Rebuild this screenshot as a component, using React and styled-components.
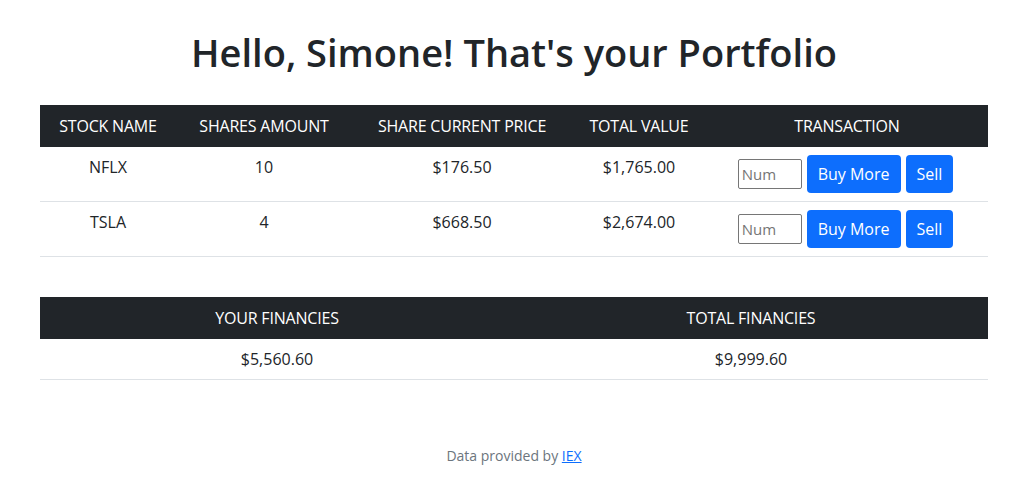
import styled, { createGlobalStyle } from "styled-components";

const GlobalStyle = createGlobalStyle`
  body {
    margin: 0;
    background: #fff;
    color: #212529;
    font-family: "Open Sans", "Noto Sans", sans-serif;
    font-size: 16px;
    line-height: 1.5;
  }
`

const stocks = [
    { name: "NFLX", amount: 10, price: "$176.50", total: "$1,765.00" },
    { name: "TSLA", amount: 4, price: "$668.50", total: "$2,674.00" },
]

function App(){
    return(
        <Page>
            <GlobalStyle />
            <Title>Hello, Simone! That's your Portfolio</Title>
            <Table>
                <colgroup>
                    <col style={{ width: "136px" }} />
                    <col style={{ width: "176px" }} />
                    <col style={{ width: "220px" }} />
                    <col style={{ width: "134px" }} />
                    <col />
                </colgroup>
                <thead>
                    <tr>
                        <Th>STOCK NAME</Th>
                        <Th>SHARES AMOUNT</Th>
                        <Th>SHARE CURRENT PRICE</Th>
                        <Th>TOTAL VALUE</Th>
                        <Th>TRANSACTION</Th>
                    </tr>
                </thead>
                <tbody>
                    {stocks.map((stock)=> (
                        <tr key={stock.name}>
                            <Td>{stock.name}</Td>
                            <Td>{stock.amount}</Td>
                            <Td>{stock.price}</Td>
                            <Td>{stock.total}</Td>
                            <Td>
                                <Transaction>
                                    <NumInput placeholder="Num" />
                                    <Button>Buy More</Button>
                                    <Button>Sell</Button>
                                </Transaction>
                            </Td>
                        </tr>
                    ))}
                </tbody>
            </Table>
            <Table $spaced>
                <colgroup>
                    <col style={{ width: "50%" }} />
                    <col style={{ width: "50%" }} />
                </colgroup>
                <thead>
                    <tr>
                        <Th>YOUR FINANCIES</Th>
                        <Th>TOTAL FINANCIES</Th>
                    </tr>
                </thead>
                <tbody>
                    <tr>
                        <Td>$5,560.60</Td>
                        <Td>$9,999.60</Td>
                    </tr>
                </tbody>
            </Table>
            <Footer>
                Data provided by <a href="#">IEX</a>
            </Footer>
        </Page>
    )
}

export default App


const Page = styled.div`
    display: flex;
    flex-direction: column;
    padding: 0 36px 0 40px;
`

const Title = styled.h1`
    margin: 28px 0 29px;
    text-align: center;
    font-size: 38px;
    font-weight: 600;
    line-height: 48px;
    color: #212529;
`

const Table = styled.table`
    width: 948px;
    border-collapse: collapse;
    table-layout: fixed;
    margin-top: ${props => props.$spaced ? "40px" : "0"};
    text-align: center;
`

const Th = styled.th`
    background-color: #212529;
    color: #fff;
    font-weight: 400;
    padding: 9px 8px;
    white-space: nowrap;
    letter-spacing: -0.2px;
`

const Td = styled.td`
    padding: 8px;
    vertical-align: top;
    border-bottom: 1px solid #dee2e6;
    color: #212529;
`

const Transaction = styled.div`
    display: flex;
    justify-content: center;
    align-items: center;
    gap: 4px;
    margin-left: -3px;
`

const NumInput = styled.input`
    width: 64px;
    height: 30px;
    box-sizing: border-box;
    border: 1px solid #767676;
    border-radius: 2px;
    padding: 1px 3px;
    font-family: "Open Sans", "Noto Sans", sans-serif;
    font-size: 15px;
    &::placeholder {
        color: #757575;
    }
`

const Button = styled.button`
    height: 38px;
    padding: 0 11px;
    border: none;
    border-radius: 4px;
    background-color: #0d6efd;
    color: #fff;
    font-family: "Open Sans", "Noto Sans", sans-serif;
    font-size: 16px;
    margin-left: 1px;
`

const Footer = styled.p`
    margin: 65px 0 0;
    text-align: center;
    font-size: 14px;
    color: #6c757d;

    a {
        color: #0d6efd;
    }
`
